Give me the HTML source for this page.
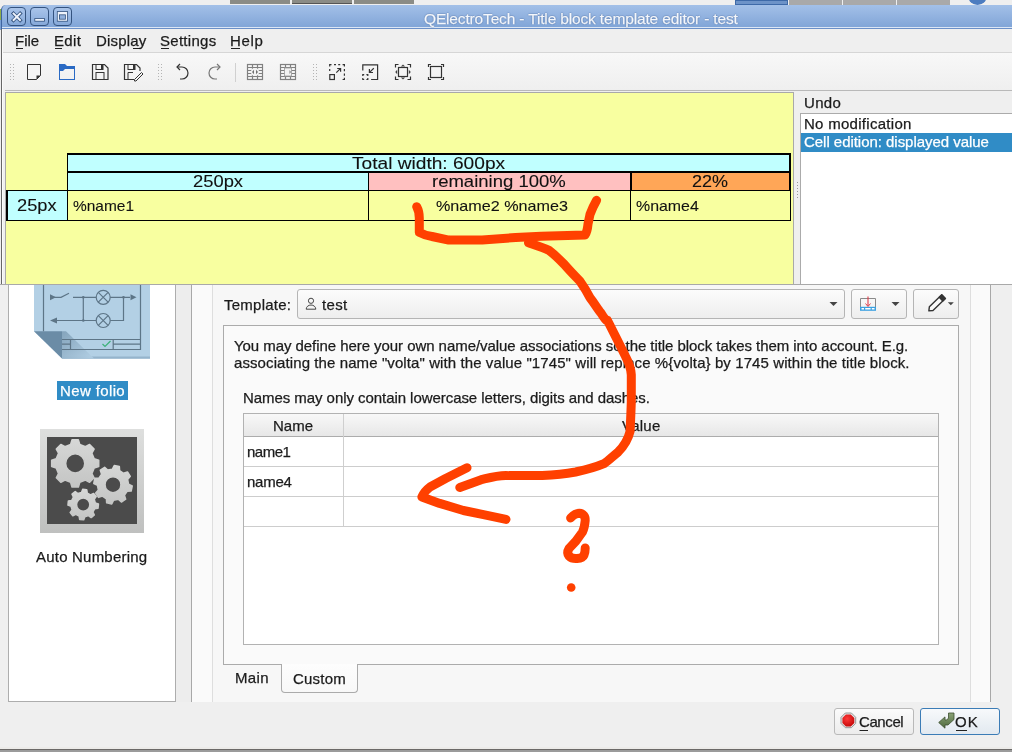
<!DOCTYPE html>
<html><head><meta charset="utf-8">
<style>
*{margin:0;padding:0;box-sizing:border-box}
html,body{width:1012px;height:752px;overflow:hidden;background:#efefef;font-family:"Liberation Sans",sans-serif;font-size:15px;color:#1b1b1b;position:relative}
.a{position:absolute}
.t{position:absolute;white-space:nowrap;line-height:1;-webkit-font-smoothing:antialiased;will-change:transform;-webkit-text-stroke:0.25px currentColor}
svg{position:absolute;overflow:visible}
</style></head><body>

<!-- top background strips -->
<div class="a" style="left:230px;top:0;width:60px;height:4px;background:#8b8c86"></div>
<div class="a" style="left:292px;top:0;width:60px;height:4px;background:#8b8c86;border-bottom:1px solid #555"></div>
<div class="a" style="left:354px;top:0;width:60px;height:4px;background:#8b8c86"></div>
<div class="a" style="left:735px;top:0;width:53px;height:5px;background:#6d93c8;border:1px solid #3e6aa8"></div>
<div class="a" style="left:789px;top:0;width:53px;height:5px;background:#a9a9a9"></div>
<div class="a" style="left:843px;top:0;width:53px;height:5px;background:#a9a9a9"></div>
<div class="a" style="left:897px;top:0;width:53px;height:5px;background:#a9a9a9"></div>
<div class="a" style="left:968px;top:-14px;width:19px;height:19px;border-radius:50%;background:#4c7cc0"></div>
<div class="a" style="left:0;top:9px;width:2px;height:11px;background:#8fae4a"></div>
<div class="a" style="left:0;top:20px;width:2px;height:10px;background:#7aa0d4"></div>

<!-- ===== underlying dialog ===== -->
<div class="a" style="left:8px;top:270px;width:168px;height:432px;background:#fff;border:1px solid #adadad"></div>
<div class="a" style="left:176px;top:270px;width:15px;height:432px;background:#ededed"></div>
<div class="a" style="left:191px;top:270px;width:1px;height:432px;background:#a8a8a8"></div>
<div class="a" style="left:192px;top:270px;width:20px;height:432px;background:#fafafa"></div>
<div class="a" style="left:212px;top:270px;width:1px;height:432px;background:#dedede"></div>
<div class="a" style="left:213px;top:270px;width:757px;height:432px;background:#f7f7f7"></div>
<div class="a" style="left:970px;top:270px;width:1px;height:432px;background:#dedede"></div>
<div class="a" style="left:971px;top:270px;width:19px;height:432px;background:#fafafa"></div>
<div class="a" style="left:990px;top:270px;width:1px;height:432px;background:#a8a8a8"></div>
<div class="a" style="left:0;top:747px;width:1012px;height:2px;background:#ecebe9"></div><div class="a" style="left:0;top:749px;width:1012px;height:1px;background:#6b6967"></div><div class="a" style="left:0;top:750px;width:1012px;height:2px;background:#9b9b9b"></div>

<!-- new folio highlight -->
<div class="a" style="left:57px;top:381px;width:71px;height:19px;background:#308cc6"></div>

<!-- template combo & buttons -->
<div class="a" style="left:297px;top:289px;width:548px;height:30px;border:1px solid #b5b5b5;border-radius:3px;background:linear-gradient(#fcfcfc,#eeeeee)"></div>
<div class="a" style="left:851px;top:289px;width:56px;height:30px;border:1px solid #b5b5b5;border-radius:3px;background:linear-gradient(#fcfcfc,#eeeeee)"></div>
<div class="a" style="left:913px;top:289px;width:46px;height:30px;border:1px solid #b5b5b5;border-radius:3px;background:linear-gradient(#fcfcfc,#eeeeee)"></div>

<!-- group box -->
<div class="a" style="left:223px;top:325px;width:736px;height:340px;border:1px solid #ababab;background:#fafafa"></div>
<!-- table -->
<div class="a" style="left:243px;top:413px;width:696px;height:232px;border:1px solid #b2b2b2;background:#fff"></div>
<div class="a" style="left:244px;top:414px;width:694px;height:22px;background:linear-gradient(#f8f8f8,#e7e7e7)"></div>
<div class="a" style="left:244px;top:436px;width:694px;height:1px;background:#acacac"></div>
<div class="a" style="left:343px;top:414px;width:1px;height:113px;background:#cfcfcf"></div>
<div class="a" style="left:244px;top:466px;width:694px;height:1px;background:#cdcdcd"></div>
<div class="a" style="left:244px;top:496px;width:694px;height:1px;background:#cdcdcd"></div>
<div class="a" style="left:244px;top:526px;width:694px;height:1px;background:#cdcdcd"></div>
<!-- tabs -->
<div class="a" style="left:281px;top:664px;width:77px;height:29px;border:1px solid #ababab;border-top:none;border-radius:0 0 4px 4px;background:linear-gradient(#fdfdfd,#f8f8f8)"></div>

<!-- dialog buttons -->
<div class="a" style="left:834px;top:708px;width:80px;height:27px;border:1px solid #b9b9b9;border-radius:3px;background:linear-gradient(#fbfbfb,#ececec)"></div>
<div class="a" style="left:920px;top:708px;width:80px;height:27px;border:1px solid #3b7cb6;border-radius:3px;background:linear-gradient(#f7f9fb,#e2e9f0)"></div>

<!-- new folio icon -->
<svg style="left:0;top:0" width="160" height="370">
  <defs>
    <linearGradient id="fold" x1="0" y1="0" x2="1" y2="1">
      <stop offset="0" stop-color="#7f9fb7"/><stop offset="1" stop-color="#b3d0e5"/>
    </linearGradient>
  </defs>
  <path d="M34 270H150V358.6H62L34 331.2Z" fill="#b3d0e5"/>
  <rect x="62" y="356.5" width="88" height="2.2" fill="#95b4cc"/>
  <path d="M62 331.2h4l28 27.4h-32z" fill="url(#fold)" opacity="0.9"/>
  <path d="M34 331.2H62V358.6Z" fill="#6b8ca6"/>
  <g fill="none" stroke="#5d7587" stroke-width="1.2">
    <path d="M43.5 270V331.2M140.5 270V349.5H62M62 339.5H140.5M62 344.2H70.5M113.2 344.2H140.5M70.5 339.5V349.5M113.2 339.5V349.5"/>
    <path d="M50 297.3h11l8-4M73 297.3h23M110.2 297.3H130M83.3 297.3V320.5M96.2 320.5H57M110.2 320.5h13.3V297.3"/>
    <circle cx="103.2" cy="297.3" r="7"/>
    <circle cx="103.2" cy="320.5" r="7"/>
    <path d="M98.3 292.4l9.8 9.8M108.1 292.4l-9.8 9.8M98.3 315.6l9.8 9.8M108.1 315.6l-9.8 9.8"/>
  </g>
  <path d="M50 294.3v6l6-3zM136.5 297.3l-6-3v6zM50 320.5l7-3v6z" fill="#5d7587"/>
  <circle cx="83.3" cy="297.3" r="1.3" fill="#5d7587"/><circle cx="83.3" cy="320.5" r="1.3" fill="#5d7587"/><circle cx="123.5" cy="297.3" r="1.3" fill="#5d7587"/>
  <path d="M102.5 344l2.5 2.5 5.5-5.5" fill="none" stroke="#3cb179" stroke-width="1.2"/>
</svg>

<!-- gears icon -->
<svg style="left:0;top:0" width="160" height="540">
  <defs>
    <linearGradient id="gframe" x1="0" y1="0" x2="0" y2="1">
      <stop offset="0" stop-color="#dedfde"/><stop offset="1" stop-color="#bfc0bf"/>
    </linearGradient>
    <linearGradient id="ggear" x1="0" y1="0" x2="0" y2="1">
      <stop offset="0" stop-color="#d6d7d6"/><stop offset="1" stop-color="#c4c5c4"/>
    </linearGradient>
  </defs>
  <rect x="40" y="429" width="104" height="104" fill="url(#gframe)"/>
  <rect x="47" y="437" width="90" height="87" fill="#4b4b4b"/>
  <g fill="url(#ggear)" stroke="url(#ggear)" stroke-width="1.6" stroke-linejoin="round"><path fill-rule="evenodd" d="M98.69 460.25 L98.69 466.55 L94.16 467.95 L91.83 473.59 L94.04 477.78 L89.58 482.24 L85.39 480.03 L79.75 482.36 L78.35 486.89 L72.05 486.89 L70.65 482.36 L65.01 480.03 L60.82 482.24 L56.36 477.78 L58.57 473.59 L56.24 467.95 L51.71 466.55 L51.71 460.25 L56.24 458.85 L58.57 453.21 L56.36 449.02 L60.82 444.56 L65.01 446.77 L70.65 444.44 L72.05 439.91 L78.35 439.91 L79.75 444.44 L85.39 446.77 L89.58 444.56 L94.04 449.02 L91.83 453.21 L94.16 458.85Z M84.80 463.40 A9.600000000000001 9.600000000000001 0 1 0 65.60 463.40 A9.600000000000001 9.600000000000001 0 1 0 84.80 463.40Z"/><path fill-rule="evenodd" d="M132.16 485.98 L131.14 490.99 L127.05 491.24 L124.34 495.26 L125.64 499.15 L121.38 501.97 L118.31 499.26 L113.55 500.19 L111.72 503.86 L106.71 502.84 L106.46 498.75 L102.44 496.04 L98.55 497.34 L95.73 493.08 L98.44 490.01 L97.51 485.25 L93.84 483.42 L94.86 478.41 L98.95 478.16 L101.66 474.14 L100.36 470.25 L104.62 467.43 L107.69 470.14 L112.45 469.21 L114.28 465.54 L119.29 466.56 L119.54 470.65 L123.56 473.36 L127.45 472.06 L130.27 476.32 L127.56 479.39 L128.49 484.15Z M121.00 484.70 A8.0 8.0 0 1 0 105.00 484.70 A8.0 8.0 0 1 0 121.00 484.70Z"/><path fill-rule="evenodd" d="M98.39 504.09 L97.99 508.12 L94.72 508.62 L92.91 511.98 L94.30 514.98 L91.17 517.54 L88.50 515.59 L84.85 516.69 L83.71 519.79 L79.68 519.39 L79.18 516.12 L75.82 514.31 L72.82 515.70 L70.26 512.57 L72.21 509.90 L71.11 506.25 L68.01 505.11 L68.41 501.08 L71.68 500.58 L73.49 497.22 L72.10 494.22 L75.23 491.66 L77.90 493.61 L81.55 492.51 L82.69 489.41 L86.72 489.81 L87.22 493.08 L90.58 494.89 L93.58 493.50 L96.14 496.63 L94.19 499.30 L95.29 502.95Z M89.90 504.60 A6.7 6.7 0 1 0 76.50 504.60 A6.7 6.7 0 1 0 89.90 504.60Z"/></g>
</svg>

<!-- person icon + combo arrows + button icons -->
<svg style="left:0;top:0" width="1012" height="752">
  <circle cx="311" cy="300.8" r="2.6" fill="none" stroke="#444" stroke-width="1"/>
  <path d="M306.2 309.2h9.6a4.8 4.2 0 0 0-9.6 0z" fill="none" stroke="#444" stroke-width="1"/>
  <path d="M829.5 302h8l-4 4z" fill="#444"/>
  <path d="M891.5 302h8l-4 4z" fill="#444"/>
  <path d="M947.8 302.3h6l-3 3z" fill="#444"/>
  <!-- icon in button 2 -->
  <path d="M860.5 307v-8.5h15v8.5" fill="none" stroke="#8a8a8a" stroke-width="1"/>
  <rect x="860" y="306.8" width="16" height="4" fill="#3ba0e0"/>
  <path d="M861.5 308.8h2.5M865.2 308.8h5.4M871.8 308.8h2.7" stroke="#fff" stroke-width="1.4"/>
  <path d="M868 296.5v9.5" stroke="#e03c48" stroke-width="1.1"/>
  <path d="M865.5 303.5l2.5 3 2.5-3" fill="none" stroke="#e0404c" stroke-width="1"/>
  <!-- pencil -->
  <g transform="translate(936.2,303.8) rotate(-44)"><path d="M-10.2 0L-7 -2.6H10.2V2.6H-7Z" fill="#fafafa" stroke="#333" stroke-width="1.4" stroke-linejoin="round"/><rect x="6" y="-3.2" width="4.9" height="6.4" fill="#333"/></g>
  
  <!-- cancel octagon -->
  <defs><radialGradient id="redg" cx="0.4" cy="0.35" r="0.7"><stop offset="0" stop-color="#ff3a3a"/><stop offset="1" stop-color="#c40808"/></radialGradient>
  <linearGradient id="okg" x1="0" y1="0" x2="0" y2="1"><stop offset="0" stop-color="#8aa276"/><stop offset="1" stop-color="#4f6a3e"/></linearGradient></defs>
  <path d="M845.3 713h6.1l4.3 4.3v6.1l-4.3 4.3h-6.1l-4.3-4.3v-6.1z" fill="#e6e6e6" stroke="#8c8c8c" stroke-width="0.9"/>
  <path d="M845.9 714.6h4.9l3.5 3.5v4.9l-3.5 3.5h-4.9l-3.5-3.5v-4.9z" fill="url(#redg)"/>
  <!-- ok arrow -->
  <path d="M948.5 713h5.5v6.5l-6 5.5h-3v3.2l-6.3-5.7 6.3-5.6v3.1h1.6l1.9-1.9z" fill="url(#okg)" stroke="#3c4f30" stroke-width="0.8" stroke-linejoin="round"/>
  <!-- underlines -->
  <rect x="859.5" y="730" width="8.5" height="1" fill="#222"/>
  <rect x="956" y="730" width="11" height="1" fill="#222"/>
</svg>


<!-- ===== editor window ===== -->
<div class="a" style="left:1px;top:5px;width:1011px;height:24px;background:linear-gradient(#a3c0e8,#7ea3d6);border-top-left-radius:5px;border-left:1px solid #3f64a0"></div>
<div class="a" style="left:2px;top:27px;width:1010px;height:1px;background:#dbe6f5"></div>
<div class="a" style="left:2px;top:28px;width:1010px;height:1px;background:#6b90c8"></div>
<!-- title buttons -->
<div class="a" style="left:7px;top:7px;width:19px;height:19px;border:1.4px solid #34537f;border-radius:4px;background:linear-gradient(#a9c4ea,#86a9d9)"></div>
<div class="a" style="left:30px;top:7px;width:19px;height:19px;border:1.4px solid #34537f;border-radius:4px;background:linear-gradient(#a9c4ea,#86a9d9)"></div>
<div class="a" style="left:53px;top:7px;width:19px;height:19px;border:1.4px solid #34537f;border-radius:4px;background:linear-gradient(#a9c4ea,#86a9d9)"></div>
<svg style="left:0;top:0" width="80" height="30">
  <path d="M12.2 12.2l9.2 9.2M21.4 12.2l-9.2 9.2" stroke="#34537f" stroke-width="3.6"/>
  <path d="M12.9 12.9l7.8 7.8M20.7 12.9l-7.8 7.8" stroke="#eef3fb" stroke-width="2"/>
  <rect x="34.4" y="18.1" width="10.4" height="3.5" fill="#34537f"/>
  <rect x="35.2" y="18.9" width="8.8" height="1.9" fill="#eef3fb"/>
  <rect x="56.9" y="11.1" width="11" height="10.5" fill="#34537f"/>
  <rect x="57.7" y="11.9" width="9.4" height="8.9" fill="#eef3fb"/>
  <rect x="59" y="14.4" width="6.8" height="5.2" fill="#34537f"/>
  <rect x="59.8" y="15.2" width="5.2" height="3.6" fill="#90b0dc"/>
</svg>
<!-- window body -->
<div class="a" style="left:1px;top:29px;width:1011px;height:256px;background:#efefef;border-left:1px solid #666"></div>
<div class="a" style="left:2px;top:52px;width:1010px;height:1px;background:#d6d6d6"></div>
<div class="a" style="left:2px;top:53px;width:1010px;height:37px;background:linear-gradient(#f8f8f8,#efefef)"></div>
<div class="a" style="left:5px;top:90px;width:1007px;height:1px;background:#b9b9b9"></div><div class="a" style="left:2px;top:29px;width:1px;height:256px;background:#fbfbfb"></div>
  <!-- toolbar icons -->
  <svg class="a" style="left:0;top:53px" width="460" height="37" viewBox="0 53 460 37">
    <g fill="#b4b4b4">
      <rect x="10" y="64" width="1" height="1"/><rect x="13" y="64" width="1" height="1"/>
      <rect x="10" y="67" width="1" height="1"/><rect x="13" y="67" width="1" height="1"/>
      <rect x="10" y="70" width="1" height="1"/><rect x="13" y="70" width="1" height="1"/>
      <rect x="10" y="73" width="1" height="1"/><rect x="13" y="73" width="1" height="1"/>
      <rect x="10" y="76" width="1" height="1"/><rect x="13" y="76" width="1" height="1"/>
      <rect x="10" y="79" width="1" height="1"/><rect x="13" y="79" width="1" height="1"/>
      <rect x="158" y="64" width="1" height="1"/><rect x="161" y="64" width="1" height="1"/>
      <rect x="158" y="67" width="1" height="1"/><rect x="161" y="67" width="1" height="1"/>
      <rect x="158" y="70" width="1" height="1"/><rect x="161" y="70" width="1" height="1"/>
      <rect x="158" y="73" width="1" height="1"/><rect x="161" y="73" width="1" height="1"/>
      <rect x="158" y="76" width="1" height="1"/><rect x="161" y="76" width="1" height="1"/>
      <rect x="158" y="79" width="1" height="1"/><rect x="161" y="79" width="1" height="1"/>
      <rect x="313" y="64" width="1" height="1"/><rect x="316" y="64" width="1" height="1"/>
      <rect x="313" y="67" width="1" height="1"/><rect x="316" y="67" width="1" height="1"/>
      <rect x="313" y="70" width="1" height="1"/><rect x="316" y="70" width="1" height="1"/>
      <rect x="313" y="73" width="1" height="1"/><rect x="316" y="73" width="1" height="1"/>
      <rect x="313" y="76" width="1" height="1"/><rect x="316" y="76" width="1" height="1"/>
      <rect x="313" y="79" width="1" height="1"/><rect x="316" y="79" width="1" height="1"/>
    </g>
    <!-- new -->
    <path d="M27.5 64.5h13v11l-4 4h-9z" fill="#f4f4f4" stroke="#333" stroke-width="1"/>
    <path d="M36.5 75.5h4l-4 4z" fill="#333"/>
    <!-- open -->
    <path d="M59 64h6l2 2h8v3h-10l-2 2h-4z" fill="#2a6ac4"/>
    <rect x="59.5" y="66.5" width="15" height="13" fill="none" stroke="#2a6ac4" stroke-width="1"/>
    <!-- save -->
    <path d="M92.5 64.5h12l3.5 3.5v11.5h-15.5z" fill="none" stroke="#333" stroke-width="1.2"/>
    <rect x="96" y="64.5" width="7" height="5" fill="none" stroke="#333" stroke-width="1"/>
    <rect x="101" y="65" width="2" height="4" fill="#333"/>
    <rect x="96" y="72.5" width="8" height="7" fill="none" stroke="#333" stroke-width="1"/>
    <!-- save as -->
    <path d="M134 79.5h-9.5v-15h12l3.5 3.5v3" fill="none" stroke="#333" stroke-width="1.2"/>
    <rect x="128" y="64.5" width="7" height="5" fill="none" stroke="#333" stroke-width="1"/>
    <rect x="133" y="65" width="2" height="4" fill="#333"/>
    <path d="M128 79.5v-7h5" fill="none" stroke="#333" stroke-width="1"/>
    <path d="M134.5 79.5l7-7 1.5 1.5-7 7h-1.5z" fill="#f4f4f4" stroke="#333" stroke-width="1"/>
    <!-- undo -->
    <path d="M177 67h5a5.5 5.5 0 0 1 0 12h-2" fill="none" stroke="#333" stroke-width="1.2"/>
    <path d="M180 64l-3 3 3 3" fill="none" stroke="#333" stroke-width="1.2"/>
    <!-- redo -->
    <path d="M220 67h-5a5.5 5.5 0 0 0 0 12h2" fill="none" stroke="#777" stroke-width="1.2"/>
    <path d="M217 64l3 3-3 3" fill="none" stroke="#777" stroke-width="1.2"/>
    <!-- separator -->
    <rect x="235" y="63" width="1" height="19" fill="#d0d0d0"/>
    <!-- grid 1 -->
    <g fill="none" stroke="#808080" stroke-width="1.2">
      <rect x="247.5" y="64.5" width="15" height="15"/>
      <path d="M252.5 64.5v15M257.5 64.5v15M247.5 67.5h15M247.5 70.5h15M247.5 73.5h15M247.5 76.5h15"/>
      <rect x="280.5" y="64.5" width="15" height="15"/>
      <path d="M285.5 64.5v15M290.5 64.5v15M280.5 67.5h15M280.5 70.5h15M280.5 73.5h15M280.5 76.5h15"/>
    </g>
    <rect x="251" y="68" width="8" height="8" rx="4" fill="#f2f2f2"/>
    <path d="M252 72l2-2.3v4.6zM258 72l-2-2.3v4.6z" fill="#707070"/>
    <rect x="284.5" y="68" width="7" height="8" fill="#f2f2f2" stroke="#9a9a9a" stroke-width="0.8"/>
    <path d="M291 72l-1.5-2v4z" fill="#808080"/>
    <!-- zoom in -->
    <g fill="none" stroke="#333" stroke-width="1.2">
      <path d="M329.7 66.5v-1.8h1.8M334 64.7h2M338.2 64.7h2M342.6 64.7h1.8v1.8M344.4 69v2.2M344.4 73.6v2.2M344.4 77.7v1.8h-1.8M329.7 69v2"/>
      <rect x="329.8" y="74.6" width="4.6" height="4.9"/>
      <path d="M336.3 72.6l4.3-4.2M337.2 68.5h3.4v3.2"/>
      <!-- zoom out -->
      <path d="M362.8 70.6V64.8h14.8v14.7h-6.5"/>
      <path d="M362.8 76v-1.4h1.4M366.4 74.6h1.4v1.4M367.8 78.1v1.4h-1.4M364.2 79.5h-1.4v-1.4"/>
      <path d="M373.8 68.2l-4.3 4.2M373 72.5h-3.6v-3.6"/>
      <!-- fit -->
      <path d="M395.5 67.5v-3h3M407.5 64.5h3v3M410.5 76.5v3h-3M398.5 79.5h-3v-3"/>
      <rect x="398.5" y="67.5" width="9" height="9"/>
      <!-- reset -->
      <path d="M428.5 67v-2.5h2.5M441 64.5h2.5v2.5M443.5 77v2.5h-2.5M431 79.5h-2.5v-2.5"/>
      <rect x="430.5" y="66.5" width="11" height="11"/>
    </g>
    <path d="M403 64.4l-2.2 2h4.4zM403 79.6l-2.2-2h4.4zM395.2 72l2-2.2v4.4zM410.8 72l-2-2.2v4.4z" fill="#444"/>
  </svg>

<svg style="left:0;top:0" width="300" height="60"><rect x="16" y="48" width="7" height="1" fill="#222"/><rect x="55" y="48" width="7" height="1" fill="#222"/><rect x="133" y="48" width="7" height="1" fill="#222"/><rect x="161" y="48" width="8" height="1" fill="#222"/><rect x="231" y="48" width="9" height="1" fill="#222"/></svg>
<!-- yellow view -->
<div class="a" style="left:5px;top:92px;width:789px;height:193px;background:#f8ffa0;border:1px solid #a9a9a9"></div>
<!-- title block table -->
<div class="a" style="left:67px;top:153px;width:724px;height:68px;background:#f8ffa0"></div>
<div class="a" style="left:67px;top:155px;width:724px;height:16px;background:#c0ffff"></div>
<div class="a" style="left:67px;top:173px;width:302px;height:17px;background:#c0ffff"></div>
<div class="a" style="left:369px;top:173px;width:262px;height:17px;background:#ffc0c0"></div>
<div class="a" style="left:631px;top:173px;width:160px;height:17px;background:#ffa657"></div>
<div class="a" style="left:6px;top:190px;width:61px;height:31px;background:#c0ffff"></div>
<!-- borders -->
<div class="a" style="left:67px;top:153px;width:724px;height:2px;background:#000"></div>
<div class="a" style="left:67px;top:171px;width:724px;height:2px;background:#000"></div>
<div class="a" style="left:6px;top:190px;width:785px;height:1px;background:#000"></div>
<div class="a" style="left:6px;top:220px;width:785px;height:1px;background:#000"></div>
<div class="a" style="left:67px;top:153px;width:1px;height:68px;background:#000"></div>
<div class="a" style="left:789px;top:153px;width:2px;height:37px;background:#000"></div>
<div class="a" style="left:790px;top:190px;width:1px;height:31px;background:#000"></div>
<div class="a" style="left:6px;top:190px;width:2px;height:31px;background:#000"></div>
<div class="a" style="left:368px;top:173px;width:1px;height:48px;background:#000"></div>
<div class="a" style="left:630px;top:173px;width:2px;height:17px;background:#000"></div>
<div class="a" style="left:630px;top:190px;width:1px;height:31px;background:#000"></div>
<!-- undo dock -->
<div class="a" style="left:800px;top:113px;width:220px;height:172px;background:#fff;border:1px solid #ababab"></div>
<div class="a" style="left:801px;top:133px;width:211px;height:19px;background:#308cc6"></div>
<div class="a" style="left:0;top:284px;width:1012px;height:1px;background:#a9a9a9"></div>
<svg style="left:0;top:0" width="810" height="200"><g fill="#9a9a9a"><rect x="797" y="182" width="1" height="1"/><rect x="797" y="185" width="1" height="1"/><rect x="797" y="188" width="1" height="1"/><rect x="797" y="191" width="1" height="1"/><rect x="797" y="194" width="1" height="1"/><rect x="797" y="197" width="1" height="1"/></g></svg>

<div class="t" style="left:423.5px;top:10.6px;font-size:15.5px;color:#f4f7fc;letter-spacing:-0.156px;text-shadow:0 0 1.5px #46679a,0 0 1px #46679a;">QElectroTech - Title block template editor - test</div>
<div class="t" style="left:15.0px;top:33.2px;font-size:15px;color:#1b1b1b;letter-spacing:0.000px;">File</div>
<div class="t" style="left:54.0px;top:33.2px;font-size:15px;color:#1b1b1b;letter-spacing:0.333px;">Edit</div>
<div class="t" style="left:96.0px;top:33.2px;font-size:15px;color:#1b1b1b;letter-spacing:0.167px;">Display</div>
<div class="t" style="left:160.0px;top:33.2px;font-size:15px;color:#1b1b1b;letter-spacing:0.286px;">Settings</div>
<div class="t" style="left:230.0px;top:33.2px;font-size:15px;color:#1b1b1b;letter-spacing:0.667px;">Help</div>
<div class="t" style="left:804.0px;top:94.5px;font-size:15px;color:#1b1b1b;letter-spacing:0.333px;">Undo</div>
<div class="t" style="left:804.0px;top:115.6px;font-size:15px;color:#1b1b1b;letter-spacing:0.286px;">No modification</div>
<div class="t" style="left:804.0px;top:133.9px;font-size:15px;color:#ffffff;letter-spacing:-0.036px;">Cell edition: displayed value</div>
<div class="t" style="left:352.0px;top:155.1px;font-size:17px;color:#111;transform:scaleX(1.1250);transform-origin:0 0;-webkit-text-stroke:0.1px currentColor;">Total width: 600px</div>
<div class="t" style="left:192.5px;top:173.4px;font-size:17px;color:#111;transform:scaleX(1.0800);transform-origin:0 0;-webkit-text-stroke:0.1px currentColor;">250px</div>
<div class="t" style="left:432.2px;top:173.4px;font-size:17px;color:#111;transform:scaleX(1.0884);transform-origin:0 0;-webkit-text-stroke:0.1px currentColor;">remaining 100%</div>
<div class="t" style="left:691.6px;top:172.9px;font-size:17px;color:#111;transform:scaleX(1.0576);transform-origin:0 0;-webkit-text-stroke:0.1px currentColor;">22%</div>
<div class="t" style="left:16.9px;top:197.0px;font-size:17px;color:#111;transform:scaleX(1.0743);transform-origin:0 0;-webkit-text-stroke:0.1px currentColor;">25px</div>
<div class="t" style="left:73.0px;top:197.9px;font-size:15px;color:#111;transform:scaleX(1.0305);transform-origin:0 0;-webkit-text-stroke:0.1px currentColor;">%name1</div>
<div class="t" style="left:436.4px;top:197.8px;font-size:15px;color:#111;transform:scaleX(1.0762);transform-origin:0 0;-webkit-text-stroke:0.1px currentColor;">%name2 %name3</div>
<div class="t" style="left:636.2px;top:197.8px;font-size:15px;color:#111;transform:scaleX(1.0593);transform-origin:0 0;-webkit-text-stroke:0.1px currentColor;">%name4</div>
<div class="t" style="left:60.0px;top:382.9px;font-size:15px;color:#ffffff;letter-spacing:0.375px;">New folio</div>
<div class="t" style="left:36.4px;top:548.9px;font-size:15px;color:#1b1b1b;letter-spacing:0.208px;">Auto Numbering</div>
<div class="t" style="left:224.0px;top:296.9px;font-size:15px;color:#1b1b1b;letter-spacing:0.250px;">Template:</div>
<div class="t" style="left:322.0px;top:296.9px;font-size:15px;color:#1b1b1b;letter-spacing:0.333px;">test</div>
<div class="t" style="left:233.8px;top:337.9px;font-size:15px;color:#1b1b1b;letter-spacing:-0.056px;">You may define here your own name/value associations so the title block takes them into account. E.g.</div>
<div class="t" style="left:233.8px;top:355.2px;font-size:15px;color:#1b1b1b;letter-spacing:0.094px;">associating the name &quot;volta&quot; with the value &quot;1745&quot; will replace %{volta} by 1745 within the title block.</div>
<div class="t" style="left:242.6px;top:389.8px;font-size:15px;color:#1b1b1b;letter-spacing:-0.056px;">Names may only contain lowercase letters, digits and dashes.</div>
<div class="t" style="left:273.0px;top:417.9px;font-size:15px;color:#1b1b1b;letter-spacing:0.000px;">Name</div>
<div class="t" style="left:622.0px;top:417.9px;font-size:15px;color:#1b1b1b;letter-spacing:0.250px;">Value</div>
<div class="t" style="left:246.9px;top:444.1px;font-size:15px;color:#1b1b1b;letter-spacing:-0.475px;">name1</div>
<div class="t" style="left:246.9px;top:474.1px;font-size:15px;color:#1b1b1b;letter-spacing:-0.225px;">name4</div>
<div class="t" style="left:235.0px;top:670.2px;font-size:15px;color:#1b1b1b;letter-spacing:0.333px;">Main</div>
<div class="t" style="left:293.0px;top:671.0px;font-size:15px;color:#1b1b1b;letter-spacing:0.200px;">Custom</div>
<div class="t" style="left:859.0px;top:713.6px;font-size:15px;color:#1b1b1b;letter-spacing:-0.400px;">Cancel</div>
<div class="t" style="left:955.0px;top:713.6px;font-size:15px;color:#1b1b1b;letter-spacing:1.000px;">OK</div>

<svg style="left:0;top:0" width="1012" height="752">
 <g fill="none" stroke="#ff4000" stroke-width="9" stroke-linecap="round" stroke-linejoin="round">
  <path d="M416.7 206.7C418.5 210 419.3 213 419.3 218L419.3 232.4C424 235 428 236 432 236.5L448.8 240.1L482.2 240.1L515.6 237.5L541.3 236.2L585 235C587 232 587.6 228.5 588 224L590 214.4C592 209 594.5 204 596.6 200.3"/>
  <path d="M528.5 242.7C538 246 544 248 549 250.4C555 255 560 260 564.4 264.5C570 271 575 276 579.9 281.2C584 287 587 292 590.1 297.9C595 304 598 310 601 313C604 318 607 322 607.5 320.4L616.6 338.5L625.6 356.6C629 363 631 369 631.3 374.7L631.3 401.8C631 412 630.5 422 630.1 431.2C628 440 624 446 618.2 451.9C612 457 608 461 603.9 463.7C594 468 585 470 575.5 472C564 474 553 475 542.3 475.6L509.1 475.6C500 474.5 490 477.5 481.2 479.7L459.8 487.4"/>
  <path d="M467 467.8L445.6 478.5L430 487C426 490 423.5 493 421.9 496.9L439.7 503.4L463.4 510.5L483.5 514.6L506 519.4"/>
  <path d="M570.6 518C573 515.5 576 513.3 579.3 513.3C583 513.5 585.5 516.5 585.2 520.5C584.8 525 584.5 528 582.5 532L575.9 541.2L569 548.5C567.5 551 567.5 554 569 556C571 558 574 558.7 577 558.5C580.5 558.3 583 557.5 584 555C585.2 552.5 585.2 550 585.2 547.9"/>
 </g>
 <circle cx="571.2" cy="587.5" r="4.3" fill="#ff4000"/>
</svg>

</body></html>
